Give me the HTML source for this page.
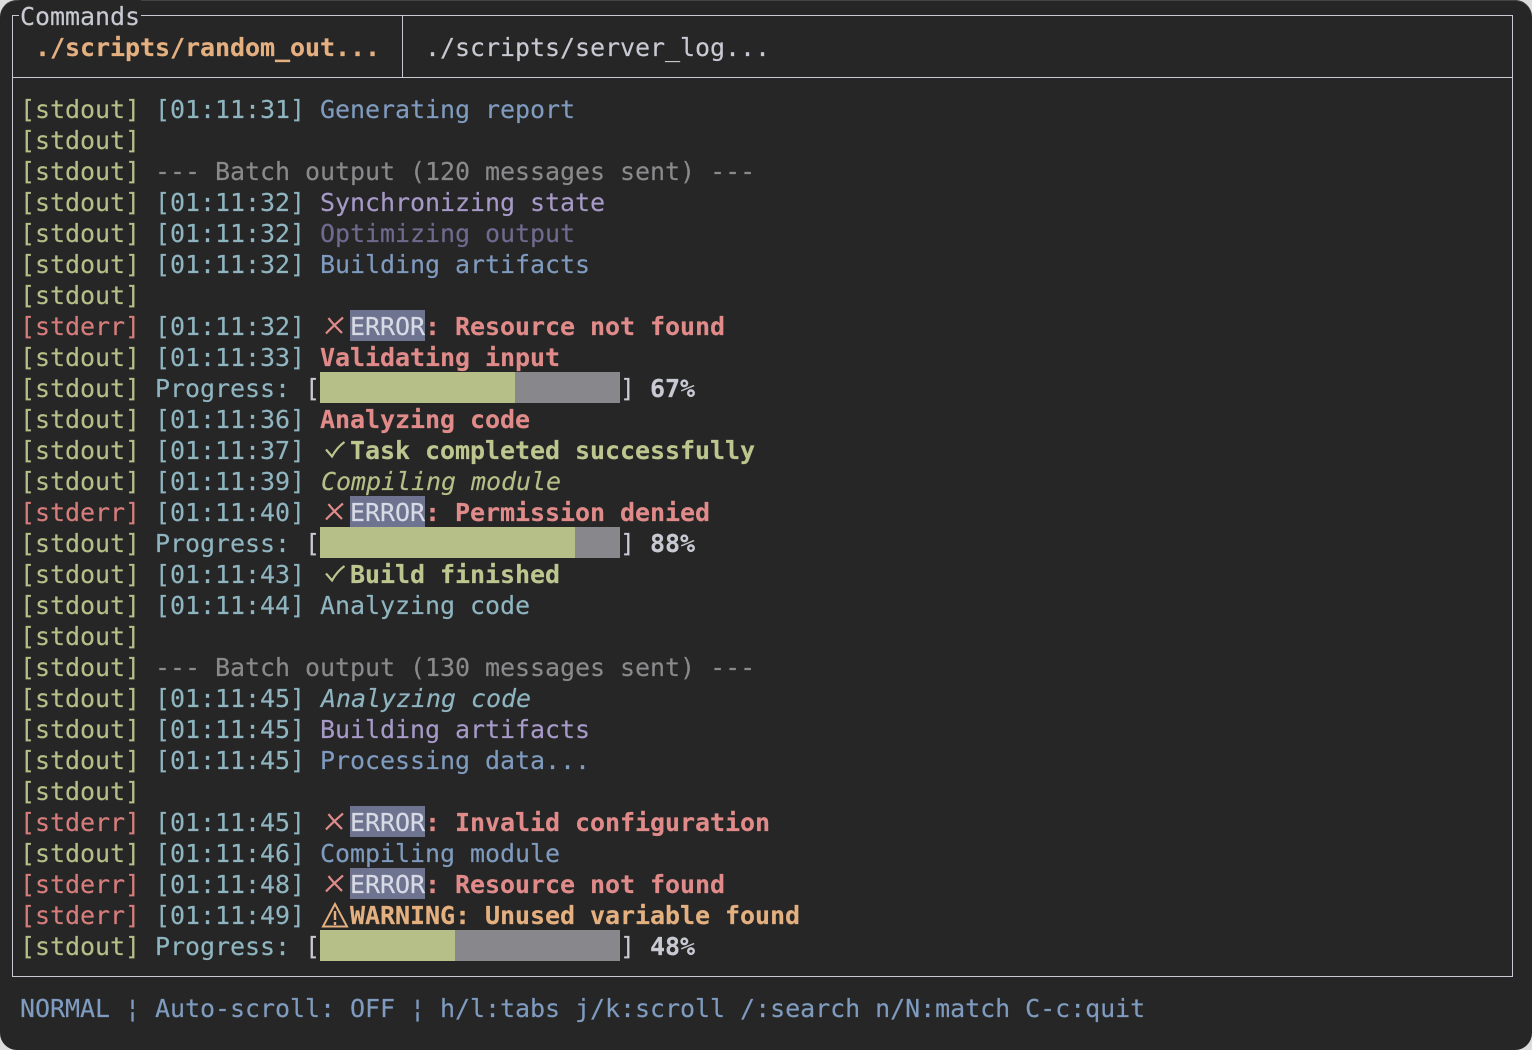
<!DOCTYPE html>
<html><head><meta charset="utf-8"><style>
html,body{margin:0;padding:0;width:1532px;height:1050px;overflow:hidden;background:#dcdcdc}
#w{position:absolute;left:0;top:0;width:1532px;height:1050px;background:#262626;border-radius:17px;box-shadow:inset 0 1px 0 #444;overflow:hidden;font-family:"DejaVu Sans Mono","Liberation Mono",monospace;font-size:25px;letter-spacing:-.05px;line-height:33px;color:#c8c9d2;-webkit-text-stroke:.15px}
.r{position:absolute;left:20px;height:31px;white-space:pre}
.l{position:absolute;background:#c8c9d2}
.o{color:#b5bf87}.e{color:#d67d7b}.t{color:#8fb5c0}.b{color:#7f9bbf}.p{color:#a79ac8}.d{color:#6f6a8f}.g{color:#8a8a8c}
.R{color:#e08b8a;font-weight:bold}.G{color:#bdc68e;font-weight:bold}.W{font-weight:bold;color:#e5b080}.I{font-style:italic;position:relative;left:1px}
.x{position:absolute;top:0;height:31px;white-space:pre}
.err{position:absolute;left:330px;top:0;width:75px;height:31px;background:#6e7390;color:#d8dbe5}
.f{position:absolute;top:0;height:31px}
svg{position:absolute;left:300px;top:0;width:30px;height:31px;fill:none}
</style></head><body><div id="w">
<div class="l" style="left:12px;top:15px;width:1501px;height:1px"></div>
<div class="l" style="left:12px;top:15px;width:1px;height:962px"></div>
<div class="l" style="left:1512px;top:15px;width:1px;height:962px"></div>
<div class="l" style="left:12px;top:976px;width:1501px;height:1px"></div>
<div class="l" style="left:12px;top:77px;width:1501px;height:1px"></div>
<div class="l" style="left:402px;top:15px;width:1px;height:62px"></div>
<div class="r" style="top:0;background:#262626;padding:0 1px;left:19px">Commands</div>
<div class="r W" style="top:31px;left:35px">./scripts/random_out...</div>
<div class="r" style="top:31px;left:425px">./scripts/server_log...</div>

<div class="r" style="top:93px"><span class="o">[stdout] </span><span class="t">[01:11:31] </span><span class="b">Generating report</span></div>
<div class="r o" style="top:124px">[stdout]</div>
<div class="r" style="top:155px"><span class="o">[stdout] </span><span class="g">--- Batch output (120 messages sent) ---</span></div>
<div class="r" style="top:186px"><span class="o">[stdout] </span><span class="t">[01:11:32] </span><span class="p">Synchronizing state</span></div>
<div class="r" style="top:217px"><span class="o">[stdout] </span><span class="t">[01:11:32] </span><span class="d">Optimizing output</span></div>
<div class="r" style="top:248px"><span class="o">[stdout] </span><span class="t">[01:11:32] </span><span class="b">Building artifacts</span></div>
<div class="r o" style="top:279px">[stdout]</div>
<div class="r" style="top:310px"><span class="e">[stderr] </span><span class="t">[01:11:32] </span><svg viewBox="0 0 30 31"><path d="M23 7.500C18 12 11 18 6 23.500M8.500 8C12 13 17 18 22 23" stroke="#e08b8a" stroke-width="2.200"/></svg><span class="err">ERROR</span><span class="x R" style="left:405px">: Resource not found</span></div>
<div class="r" style="top:341px"><span class="o">[stdout] </span><span class="t">[01:11:33] </span><span class="R">Validating input</span></div>
<div class="r" style="top:372px"><span class="o">[stdout] </span><span class="t">Progress: </span>[<span class="f" style="left:300px;width:195px;background:#b5bf87"></span><span class="f" style="left:495px;width:105px;background:#87878c"></span><span class="x" style="left:600px">]</span><span class="x" style="left:630px;font-weight:bold">67%</span></div>
<div class="r" style="top:403px"><span class="o">[stdout] </span><span class="t">[01:11:36] </span><span class="R">Analyzing code</span></div>
<div class="r" style="top:434px"><span class="o">[stdout] </span><span class="t">[01:11:37] </span><svg viewBox="0 0 30 31"><path d="M6 15.500L12 22.500C15 17 19 12 24.500 8" stroke="#bdc68e" stroke-width="2.200"/></svg><span class="x G" style="left:330px">Task completed successfully</span></div>
<div class="r" style="top:465px"><span class="o">[stdout] </span><span class="t">[01:11:39] </span><span class="o I">Compiling module</span></div>
<div class="r" style="top:496px"><span class="e">[stderr] </span><span class="t">[01:11:40] </span><svg viewBox="0 0 30 31"><path d="M23 7.500C18 12 11 18 6 23.500M8.500 8C12 13 17 18 22 23" stroke="#e08b8a" stroke-width="2.200"/></svg><span class="err">ERROR</span><span class="x R" style="left:405px">: Permission denied</span></div>
<div class="r" style="top:527px"><span class="o">[stdout] </span><span class="t">Progress: </span>[<span class="f" style="left:300px;width:255px;background:#b5bf87"></span><span class="f" style="left:555px;width:45px;background:#87878c"></span><span class="x" style="left:600px">]</span><span class="x" style="left:630px;font-weight:bold">88%</span></div>
<div class="r" style="top:558px"><span class="o">[stdout] </span><span class="t">[01:11:43] </span><svg viewBox="0 0 30 31"><path d="M6 15.500L12 22.500C15 17 19 12 24.500 8" stroke="#bdc68e" stroke-width="2.200"/></svg><span class="x G" style="left:330px">Build finished</span></div>
<div class="r" style="top:589px"><span class="o">[stdout] </span><span class="t">[01:11:44] Analyzing code</span></div>
<div class="r o" style="top:620px">[stdout]</div>
<div class="r" style="top:651px"><span class="o">[stdout] </span><span class="g">--- Batch output (130 messages sent) ---</span></div>
<div class="r" style="top:682px"><span class="o">[stdout] </span><span class="t">[01:11:45] </span><span class="t I">Analyzing code</span></div>
<div class="r" style="top:713px"><span class="o">[stdout] </span><span class="t">[01:11:45] </span><span class="p">Building artifacts</span></div>
<div class="r" style="top:744px"><span class="o">[stdout] </span><span class="t">[01:11:45] </span><span class="b">Processing data...</span></div>
<div class="r o" style="top:775px">[stdout]</div>
<div class="r" style="top:806px"><span class="e">[stderr] </span><span class="t">[01:11:45] </span><svg viewBox="0 0 30 31"><path d="M23 7.500C18 12 11 18 6 23.500M8.500 8C12 13 17 18 22 23" stroke="#e08b8a" stroke-width="2.200"/></svg><span class="err">ERROR</span><span class="x R" style="left:405px">: Invalid configuration</span></div>
<div class="r" style="top:837px"><span class="o">[stdout] </span><span class="t">[01:11:46] </span><span class="b">Compiling module</span></div>
<div class="r" style="top:868px"><span class="e">[stderr] </span><span class="t">[01:11:48] </span><svg viewBox="0 0 30 31"><path d="M23 7.500C18 12 11 18 6 23.500M8.500 8C12 13 17 18 22 23" stroke="#e08b8a" stroke-width="2.200"/></svg><span class="err">ERROR</span><span class="x R" style="left:405px">: Resource not found</span></div>
<div class="r" style="top:899px"><span class="e">[stderr] </span><span class="t">[01:11:49] </span><svg viewBox="0 0 30 31"><path d="M15 5L3 27.500H27Z" stroke="#e5b080" stroke-width="2"/><path d="M15 12V21M15 23V26" stroke="#e5b080" stroke-width="2.400"/></svg><span class="x W" style="left:330px">WARNING: Unused variable found</span></div>
<div class="r" style="top:930px"><span class="o">[stdout] </span><span class="t">Progress: </span>[<span class="f" style="left:300px;width:135px;background:#b5bf87"></span><span class="f" style="left:435px;width:165px;background:#87878c"></span><span class="x" style="left:600px">]</span><span class="x" style="left:630px;font-weight:bold">48%</span></div>
<div class="r b" style="top:992px">NORMAL ¦ Auto-scroll: OFF ¦ h/l:tabs j/k:scroll /:search n/N:match C-c:quit</div>
</div></body></html>
